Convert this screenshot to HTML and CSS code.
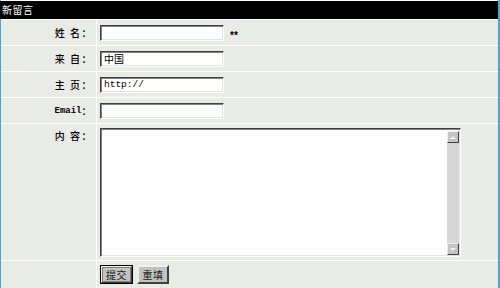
FILE: index.html
```html
<!DOCTYPE html>
<html lang="zh-CN">
<head>
<meta charset="utf-8">
<title>新留言</title>
<link rel="stylesheet" href="styles.css">
</head>
<body>
<div class="frame">
  <form class="grid">
    <div class="head">新留言</div>

    <div class="label">姓 名：</div>
    <div class="value"><span class="field"></span><span class="req">**</span></div>

    <div class="label">来 自：</div>
    <div class="value"><span class="field">中国</span></div>

    <div class="label">主 页：</div>
    <div class="value"><span class="field mono">http://</span></div>

    <div class="label"><span class="latin">Email</span>：</div>
    <div class="value"><span class="field"></span></div>

    <div class="label top">内 容：</div>
    <div class="value top">
      <div class="area">
        <div class="area-text"></div>
        <div class="sbar">
          <div class="sbtn up"><span class="tri-up"></span></div>
          <div class="strack"></div>
          <div class="sbtn down"><span class="tri-down"></span></div>
        </div>
      </div>
    </div>

    <div class="label"></div>
    <div class="value buttons">
      <span class="btn default">提交</span>
      <span class="btn">重填</span>
    </div>
  </form>
</div>
</body>
</html>
```

FILE: styles.css
```css
html, body {
  margin: 0;
  padding: 0;
  background: #ffffff;
}

body {
  font-family: "SimSun", "Noto Sans CJK SC", sans-serif;
  font-size: 10px;
  color: #000;
  width: 500px;
  height: 288px;
  overflow: hidden;
}

.frame {
  width: 497px;
  height: 288px;
  border-left: 1px solid #4aa3d3;
  border-right: 2px solid #4aa3d3;
  background: #ffffff;
}

.grid {
  margin: 0;
  padding-top: 1px;
  display: grid;
  grid-template-columns: 95px 401px;
  grid-template-rows: 18px 25px 25px 25px 25px 136px 28px;
  gap: 1px;
}

.head {
  grid-column: 1 / 3;
  background: #000;
  color: #fff;
  font-size: 10px;
  line-height: 18px;
  padding-left: 2px;
  margin-left: -1px;
  letter-spacing: 0.5px;
}

.label {
  background: #e9ebe7;
  display: flex;
  align-items: center;
  justify-content: flex-end;
  padding-right: 3px;
  white-space: pre;
  letter-spacing: 1.5px;
  font-weight: 500;
}

.label.top {
  align-items: flex-start;
  padding-top: 4px;
}

.latin {
  font-family: "Liberation Mono", monospace;
  font-size: 9px;
  font-weight: bold;
  letter-spacing: 0;
}

.value {
  background: #e9ebe7;
  display: flex;
  align-items: center;
  padding-left: 3px;
}

.value.top {
  align-items: flex-start;
  padding-top: 4px;
}

.field {
  box-sizing: border-box;
  width: 124px;
  height: 16px;
  background: #fff;
  border: 1px solid;
  border-color: #404040 #ffffff #ffffff #404040;
  box-shadow: inset 1px 1px 0 #808080, inset -1px -1px 0 #e4e4e4;
  padding: 0 2px 0 3px;
  line-height: 14px;
  font-size: 10px;
}

.mono {
  font-family: "Liberation Mono", monospace;
  font-size: 9.5px;
}

.req {
  margin-left: 6px;
  margin-top: 5px;
  font-size: 10px;
  font-family: "Liberation Sans", sans-serif;
  font-weight: bold;
  letter-spacing: 0;
}

.area {
  box-sizing: border-box;
  width: 361px;
  height: 129px;
  display: flex;
  background: #fff;
  border: 1px solid;
  border-color: #404040 #ffffff #ffffff #404040;
  box-shadow: inset 1px 1px 0 #808080, inset -1px -1px 0 #e4e4e4;
  padding: 2px 1px 1px 2px;
}

.area-text {
  flex: 1;
}

.sbar {
  width: 12px;
  display: flex;
  flex-direction: column;
  background: #d6d6d6;
}

.strack {
  flex: 1;
}

.sbtn {
  box-sizing: border-box;
  height: 12px;
  background: #c4c4c4;
  border: 1px solid;
  border-color: #efefef #404040 #404040 #efefef;
  display: flex;
  align-items: center;
  justify-content: center;
}

.tri-up {
  width: 0;
  height: 0;
  border-left: 3px solid transparent;
  border-right: 3px solid transparent;
  border-bottom: 3px solid #f4f4f4;
}

.tri-down {
  width: 0;
  height: 0;
  border-left: 3px solid transparent;
  border-right: 3px solid transparent;
  border-top: 3px solid #f4f4f4;
}

.buttons {
  align-items: flex-start;
  padding-top: 4px;
  gap: 4px;
}

.btn {
  box-sizing: border-box;
  height: 19px;
  width: 32px;
  background: #c2c2c2;
  border: 2px solid;
  border-color: #f0f0f0 #404040 #404040 #f0f0f0;
  display: flex;
  align-items: center;
  justify-content: center;
  font-size: 10px;
  color: #222;
  letter-spacing: 0.5px;
}

.btn.default {
  width: 33px;
  outline: 1px solid #000;
  outline-offset: -1px;
  border-width: 2px;
  box-shadow: inset 0 0 0 1px #808080;
}
```
